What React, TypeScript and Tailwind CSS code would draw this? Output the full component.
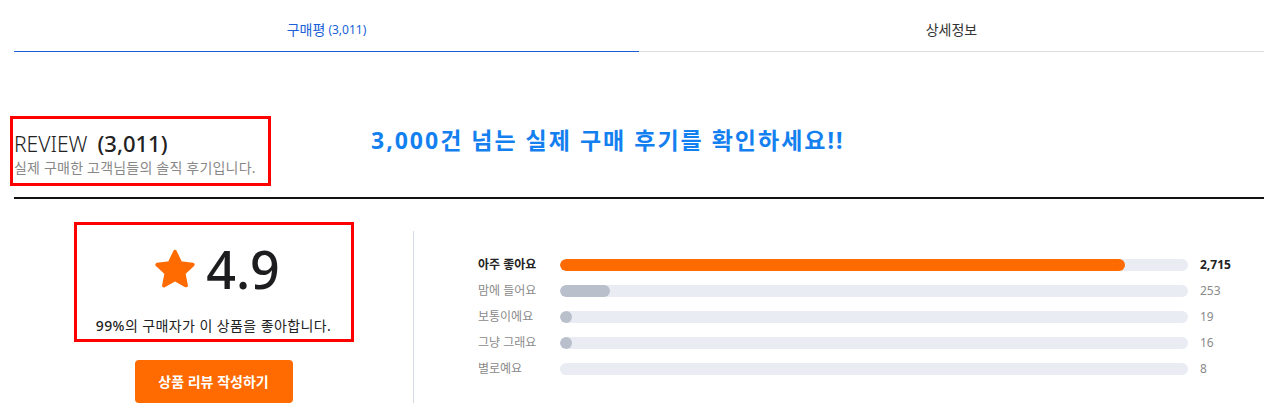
import { useState } from 'react'

const total = 3011

const ratings = [
  { label: '아주 좋아요', count: 2715, top: true },
  { label: '맘에 들어요', count: 253 },
  { label: '보통이에요', count: 19 },
  { label: '그냥 그래요', count: 16 },
  { label: '별로예요', count: 8 },
]

function Star() {
  return (
    <svg width="44" height="43" viewBox="0 0 42 41">
      <path
        d="M21 3.5 L26.2 14.4 L38 15.9 L29.3 24.1 L31.6 35.8 L21 30 L10.4 35.8 L12.7 24.1 L4 15.9 L15.8 14.4 Z"
        fill="#ff6b00"
        stroke="#ff6b00"
        strokeWidth="3.5"
        strokeLinejoin="round"
      />
    </svg>
  )
}

function RatingRow({ label, count, top }: { label: string; count: number; top?: boolean }) {
  const pct = Math.round((count / total) * 100)
  return (
    <div className="flex items-center h-[26px]">
      <div className={`w-[82px] text-[12px] ${top ? 'font-bold text-[#222]' : 'text-[#8a8a8a]'}`}>{label}</div>
      <div className="w-[628px] h-[12px] rounded-full bg-[#e9ecf3] overflow-hidden">
        {pct > 0 && (
          <div
            className={`h-full rounded-full ${top ? 'bg-[#ff6b00]' : 'bg-[#b9c0cb]'}`}
            style={{ width: `max(${pct}%, 12px)` }}
          />
        )}
      </div>
      <div className={`ml-[12px] text-[12px] ${top ? 'font-bold text-[#222]' : 'text-[#8a8a8a]'}`}>
        {count.toLocaleString('en-US')}
      </div>
    </div>
  )
}

export default function App() {
  const [tab, setTab] = useState(0)

  return (
    <div className="w-[1278px] h-[414px] overflow-hidden bg-white px-[14px] font-['Noto_Sans','Noto_Sans_CJK_KR',sans-serif] text-[#222]">
      {/* tabs */}
      <div className="flex">
        <button
          onClick={() => setTab(0)}
          className={`flex-1 h-[52px] pt-[8px] flex items-center justify-center border-b ${tab === 0 ? 'border-[#1a5fd8] text-[#1a5fd8]' : 'border-[#dddddd] text-[#333]'}`}
        >
          <span className="text-[14px]">구매평</span>
          <span className="text-[12px] ml-[3px]">(3,011)</span>
        </button>
        <button
          onClick={() => setTab(1)}
          className={`flex-1 h-[52px] pt-[8px] flex items-center justify-center border-b ${tab === 1 ? 'border-[#1a5fd8] text-[#1a5fd8]' : 'border-[#dddddd] text-[#333]'}`}
        >
          <span className="text-[14px]">상세정보</span>
        </button>
      </div>

      {/* header */}
      <div className="flex items-start mt-[64px]">
        <div className="-ml-[4px] w-[261px] h-[70px] border-[3px] border-[#ff0000] pl-[1px] pt-[11px]">
          <div className="flex items-baseline leading-[26px] text-[#222]">
            <span className="text-[21px] font-light">REVIEW</span>
            <span className="text-[22px] font-medium ml-[10px]">(3,011)</span>
          </div>
          <div className="text-[14px] tracking-[0.2px] text-[#888] leading-[18px] mt-[2px]">실제 구매한 고객님들의 솔직 후기입니다.</div>
        </div>
        <div className="ml-[100px] mt-[9px] text-[23px] tracking-[2px] font-bold text-[#1480f0] leading-[30px]">
          3,000건 넘는 실제 구매 후기를 확인하세요!!
        </div>
      </div>

      <div className="mt-[11px] h-[2px] bg-[#111]" />

      {/* summary */}
      <div className="flex">
        <div className="w-[399px] flex flex-col items-center pt-[23px]">
          <div className="w-[280px] h-[120px] border-[3px] border-[#ff0000] flex flex-col items-center">
            <div className="flex items-center mt-[20px] pl-[6px]">
              <Star />
              <span className="ml-[9px] text-[52px] font-medium leading-[48px] text-[#1d1d1f]">4.9</span>
            </div>
            <div className="mt-[22px] text-[14px] tracking-[0.4px] text-[#222]">
              <span className="font-medium">99%</span>의 구매자가 이 상품을 좋아합니다.
            </div>
          </div>
          <button className="mt-[18px] w-[158px] h-[43px] rounded-[4px] bg-[#ff6b00] text-white text-[14px] font-bold">
            상품 리뷰 작성하기
          </button>
        </div>
        <div className="mt-[32px] h-[172px] w-px bg-[#d5dbe5]" />
        <div className="pl-[64px] pt-[53px]">
          {ratings.map((r) => (
            <RatingRow key={r.label} {...r} />
          ))}
        </div>
      </div>
    </div>
  )
}
